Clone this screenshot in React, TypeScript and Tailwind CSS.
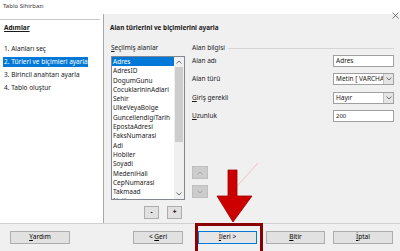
import React from 'react';

const fields = [
  'Adres',
  'AdresID',
  'DogumGunu',
  'CocuklarininAdlari',
  'Sehir',
  'UlkeVeyaBolge',
  'GuncellendigiTarih',
  'EpostaAdresi',
  'FaksNumarasi',
  'Adi',
  'Hobiler',
  'Soyadi',
  'MedeniHali',
  'CepNumarasi',
  'Takmaad',
  'Notlar',
];

const steps = [
  '1. Alanları seç',
  '2. Türleri ve biçimleri ayarla',
  '3. Birincil anahtarı ayarla',
  '4. Tablo oluştur',
];

const Chevron: React.FC<{ up?: boolean; color?: string }> = ({ up = false, color = '#606060' }) => (
  <svg width="6" height="4" viewBox="0 0 6 4">
    <path d={up ? 'M0.5 3.5 L3 1 L5.5 3.5' : 'M0.5 0.5 L3 3 L5.5 0.5'} fill="none" stroke={color} strokeWidth="0.9" />
  </svg>
);

const Btn: React.FC<{ className?: string; children: React.ReactNode }> = ({ className = '', children }) => (
  <div className={`h-[13px] flex items-center justify-center bg-[#e1e1e1] border border-[#adadad] text-[6.5px] leading-none text-black ${className}`}>
    {children}
  </div>
);

const Combo: React.FC<{ value: string }> = ({ value }) => (
  <div className="w-[61px] h-[12px] flex bg-white border border-[#a0a0a0]">
    <div className="flex-1 overflow-hidden whitespace-nowrap pl-[2px] text-[6.5px] leading-[10px]">{value}</div>
    <div className="w-[10px] flex items-center justify-center bg-[#e5e5e5] border-l border-[#c0c0c0]">
      <Chevron />
    </div>
  </div>
);

export default function App() {
  return (
    <div className="relative w-[400px] h-[251px] overflow-hidden bg-[#f0f0f0] text-[#1a1a1a] font-['Noto_Sans',sans-serif]">
      <div className="h-[14px] bg-white pl-[3px] pt-[1px] text-[6px] leading-[10px] text-[#333]">Tablo Sihirbazı</div>

      <div className="flex h-[209px]">
        {/* steps pane */}
        <div className="w-[104px] bg-white border-r border-[#a8a8a8] pt-[5px]">
          <div className="w-[100px] border-t border-[#c8c8c8]" />
          <div className="pl-[4px] pt-[3px] text-[6.5px] leading-[10px] font-bold underline">Adımlar</div>
          <div className="mt-[11px] flex flex-col gap-[3px] pl-[3px]">
            {steps.map((s, i) => (
              <div
                key={s}
                className={`w-[85px] h-[10px] pl-[1px] text-[6.5px] leading-[10px] whitespace-nowrap ${
                  i === 1 ? 'bg-[#0078d7] text-white' : ''
                }`}
              >
                {s}
              </div>
            ))}
          </div>
        </div>

        {/* main pane */}
        <div className="flex-1 pl-[6px] pt-[9px]">
          <div className="text-[6.4px] leading-[10px] font-bold whitespace-nowrap">Alan türlerini ve biçimlerini ayarla</div>

          <div className="mt-[10px] flex">
            {/* field list */}
            <div className="ml-[1px] w-[74px] flex flex-col">
              <div className="text-[6.5px] leading-[10px] whitespace-nowrap">
                <span className="underline">S</span>eçilmiş alanlar
              </div>
              <div className="mt-[3px] h-[144px] flex bg-white border border-[#828790] overflow-hidden">
                <div className="flex-1 overflow-hidden">
                  {fields.map((f, i) => (
                    <div
                      key={f}
                      className={`h-[9.3px] pl-[1px] text-[6.5px] leading-[9.3px] whitespace-nowrap ${
                        i === 0 ? 'bg-[#0078d7] text-white' : ''
                      }`}
                    >
                      {f}
                    </div>
                  ))}
                </div>
                <div className="w-[10px] flex flex-col bg-[#f0f0f0]">
                  <div className="h-[10px] flex items-center justify-center">
                    <Chevron up />
                  </div>
                  <div className="mx-[1px] h-[75px] bg-[#cdcdcd]" />
                  <div className="flex-1" />
                  <div className="h-[10px] flex items-center justify-center">
                    <Chevron />
                  </div>
                </div>
              </div>
              <div className="mt-[6px] flex justify-end gap-[8px] pr-[3px]">
                <Btn className="w-[15px] font-bold">-</Btn>
                <Btn className="w-[15px] font-bold">+</Btn>
              </div>
            </div>

            {/* field info */}
            <div className="ml-[7px] flex-1 pr-[6px] flex flex-col">
              <div className="flex items-center gap-[3px] text-[6.5px] leading-[10px]">
                <span className="whitespace-nowrap">Alan bilgisi</span>
                <div className="flex-1 border-t border-[#d5d5d5]" />
              </div>
              <div className="mt-[2px] flex items-center justify-between text-[6.5px] leading-[10px]">
                <span>Alan adı</span>
                <div className="w-[61px] h-[12px] bg-white border border-[#a0a0a0] pl-[2px] text-[6.5px] leading-[10px]">Adres</div>
              </div>
              <div className="mt-[6px] flex items-center justify-between text-[6.5px] leading-[10px]">
                <span>Alan türü</span>
                <Combo value="Metin [ VARCHAR ]" />
              </div>
              <div className="mt-[7px] flex items-center justify-between text-[6.5px] leading-[10px]">
                <span>
                  <span className="underline">G</span>iriş gerekli
                </span>
                <Combo value="Hayır" />
              </div>
              <div className="mt-[6px] flex items-center justify-between text-[6.5px] leading-[10px]">
                <span>
                  <span className="underline">U</span>zunluk
                </span>
                <div className="w-[61px] h-[12px] bg-white border border-[#a0a0a0] pl-[2px] text-[6px] leading-[10px]">200</div>
              </div>
              <div className="mt-[44px] flex flex-col gap-[6px]">
                <div className="w-[16px] h-[13px] flex items-center justify-center bg-[#cccccc] border border-[#bfbfbf]">
                  <Chevron up color="#a0a0a0" />
                </div>
                <div className="w-[16px] h-[13px] flex items-center justify-center bg-[#cccccc] border border-[#bfbfbf]">
                  <Chevron color="#a0a0a0" />
                </div>
              </div>
            </div>
          </div>
        </div>
      </div>

      {/* bottom buttons */}
      <div className="h-[28px] border-t border-[#d0d0d0] flex items-start pt-[7px] pl-[10px] pr-[7px]">
        <Btn className="w-[60px]">
          <span className="underline">Y</span>ardım
        </Btn>
        <div className="flex-1" />
        <Btn className="w-[50px]">
          &lt;&nbsp;<span className="underline">G</span>eri
        </Btn>
        <Btn className="ml-[15px] w-[59px] !border-[#0078d7] bg-[#e5e5e5]">
          <span className="underline">İ</span>leri &gt;
        </Btn>
        <Btn className="ml-[9px] w-[59px]">
          <span className="underline">B</span>itir
        </Btn>
        <Btn className="ml-[8px] w-[60px]">
          <span className="underline">İ</span>ptal
        </Btn>
      </div>

      {/* close glyph */}
      <svg className="absolute left-[392px] top-[12px]" width="7" height="7" viewBox="0 0 7 7">
        <path d="M0.5 0.5 L6.5 6.5 M6.5 0.5 L0.5 6.5" stroke="#555" strokeWidth="0.8" />
      </svg>

      {/* annotation: red frame and arrow */}
      <div className="absolute left-[195px] top-[223px] w-[68px] h-[32px] border-[3px] border-[#8b0000]" />
      <svg className="absolute left-[200px] top-[160px]" width="70" height="64" viewBox="0 0 70 64">
        <line x1="29" y1="35" x2="58" y2="3" stroke="#f4a0a0" strokeWidth="0.6" />
        <path d="M28 10 L37 10 L37 36 L52 36 L33 62 L17 36 L28 36 Z" fill="#cc0000" stroke="#990000" strokeWidth="0.8" />
      </svg>
    </div>
  );
}
